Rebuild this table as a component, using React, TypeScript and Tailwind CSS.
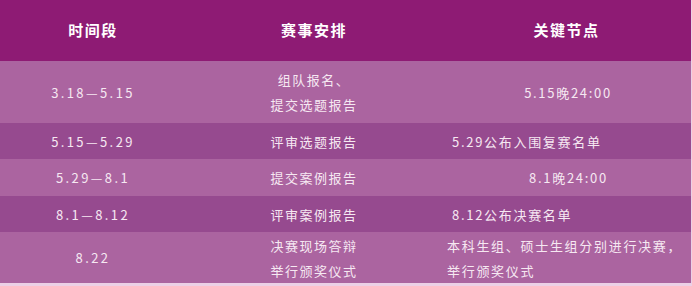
const rows = [
  {
    time: '3.18—5.15',
    plan: ['组队报名、', '提交选题报告'],
    node: ['5.15晚24:00'],
    nodeAlign: 'text-center pl-[3px]',
    bg: 'bg-[#ab64a0]',
    h: 'h-[62px]',
  },
  {
    time: '5.15—5.29',
    plan: ['评审选题报告'],
    node: ['5.29公布入围复赛名单'],
    nodeAlign: 'text-left pl-[10px]',
    bg: 'bg-[#964a8f]',
    h: 'h-[36px]',
  },
  {
    time: '5.29—8.1',
    plan: ['提交案例报告'],
    node: ['8.1晚24:00'],
    nodeAlign: 'text-center pl-[4px]',
    bg: 'bg-[#ab64a0]',
    h: 'h-[37px]',
  },
  {
    time: '8.1—8.12',
    plan: ['评审案例报告'],
    node: ['8.12公布决赛名单'],
    nodeAlign: 'text-left pl-[10px]',
    bg: 'bg-[#964a8f]',
    h: 'h-[36px]',
  },
  {
    time: '8.22',
    plan: ['决赛现场答辩', '举行颁奖仪式'],
    node: ['本科生组、硕士生组分别进行决赛，', '举行颁奖仪式'],
    nodeAlign: 'text-left pl-[5px]',
    bg: 'bg-[#ab64a0]',
    h: 'h-[51px]',
  },
];

export default function App() {
  return (
    <div
      className="w-[692px] h-[286px] bg-[#ecd0e6] overflow-hidden"
      style={{ fontFamily: '"Noto Sans CJK SC", "Noto Sans", sans-serif' }}
    >
      <div className="w-[691px]">
        {/* header */}
        <div className="grid grid-cols-[186px_256px_1fr] h-[61px] bg-[#8e1b74] items-center text-white font-bold text-[15px] tracking-[1.5px]">
          <div className="text-center">时间段</div>
          <div className="text-center">赛事安排</div>
          <div className="text-center">关键节点</div>
        </div>

        {rows.map((r) => (
          <div
            key={r.time}
            className={`grid grid-cols-[186px_256px_1fr] items-center text-[13px] leading-[25px] text-[#f6e8f2] ${r.bg} ${r.h}`}
          >
            <div className="text-center tracking-[2.4px]">{r.time}</div>
            <div className="text-center tracking-[1.5px]">
              {r.plan.map((p) => (
                <div key={p}>{p}</div>
              ))}
            </div>
            <div className={`${r.nodeAlign} tracking-[1.7px] whitespace-nowrap`}>
              {r.node.map((n) => (
                <div key={n}>{n}</div>
              ))}
            </div>
          </div>
        ))}
      </div>
    </div>
  );
}
